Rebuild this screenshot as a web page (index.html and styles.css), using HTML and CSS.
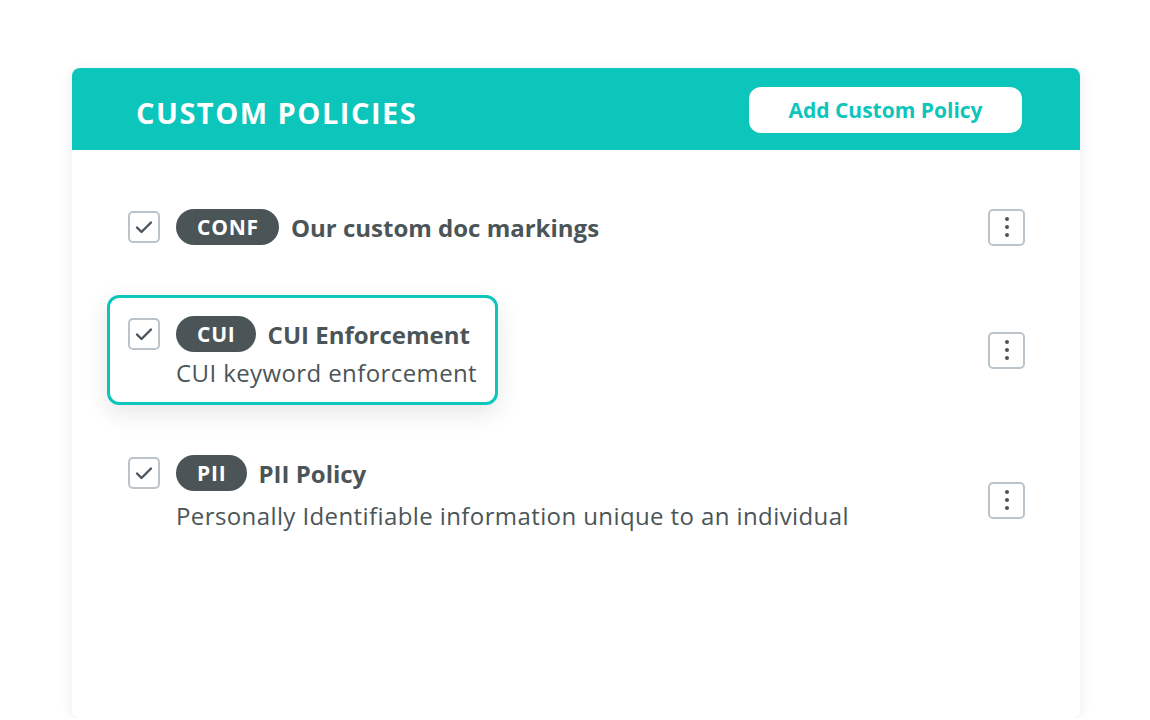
FILE: index.html
```html
<!DOCTYPE html>
<html lang="en">
<head>
    <meta charset="UTF-8">
    <meta name="viewport" content="width=device-width, initial-scale=1.0">
    <title>Custom Policies</title>
    <link rel="stylesheet" href="styles.css">
</head>
<body>
    <div class="card">
        <div class="card-header">
            <h1 class="card-title">CUSTOM POLICIES</h1>
            <button class="add-button">Add Custom Policy</button>
        </div>
        <div class="policy-list">
            <div class="policy-row">
                <div class="policy-main">
                    <div class="policy-line">
                        <span class="checkbox">
                            <svg width="20" height="20" viewBox="0 0 20 20"><path d="M3 10.5l4.5 4.5 9.5-9.5" fill="none" stroke="#4b5558" stroke-width="2.4" stroke-linecap="round" stroke-linejoin="round"/></svg>
                        </span>
                        <span class="badge">CONF</span>
                        <span class="policy-name">Our custom doc markings</span>
                    </div>
                </div>
                <button class="kebab"><span></span><span></span><span></span></button>
            </div>
            <div class="policy-row">
                <div class="policy-main selected">
                    <div class="policy-line">
                        <span class="checkbox">
                            <svg width="20" height="20" viewBox="0 0 20 20"><path d="M3 10.5l4.5 4.5 9.5-9.5" fill="none" stroke="#4b5558" stroke-width="2.4" stroke-linecap="round" stroke-linejoin="round"/></svg>
                        </span>
                        <span class="badge">CUI</span>
                        <span class="policy-name">CUI Enforcement</span>
                    </div>
                    <div class="policy-desc">CUI keyword enforcement</div>
                </div>
                <button class="kebab"><span></span><span></span><span></span></button>
            </div>
            <div class="policy-row last">
                <div class="policy-main">
                    <div class="policy-line">
                        <span class="checkbox">
                            <svg width="20" height="20" viewBox="0 0 20 20"><path d="M3 10.5l4.5 4.5 9.5-9.5" fill="none" stroke="#4b5558" stroke-width="2.4" stroke-linecap="round" stroke-linejoin="round"/></svg>
                        </span>
                        <span class="badge">PII</span>
                        <span class="policy-name">PII Policy</span>
                    </div>
                    <div class="policy-desc">Personally Identifiable information unique to an individual</div>
                </div>
                <button class="kebab"><span></span><span></span><span></span></button>
            </div>
        </div>
    </div>
</body>
</html>
```

FILE: styles.css
```css
body {
    margin: 0;
    background-color: #ffffff;
    font-family: "Open Sans", Lato, sans-serif;
    color: #4b5558;
    overflow: hidden;
}
.card {
    margin: 68px 0 0 72px;
    width: 1008px;
    height: 650px;
    background-color: #ffffff;
    border-radius: 8px;
    box-shadow: 0 2px 14px rgba(0, 0, 0, 0.08);
    overflow: hidden;
}
.card-header {
    display: flex;
    justify-content: space-between;
    align-items: center;
    height: 82px;
    padding: 0 58px 0 64px;
    background-color: #0cc5bb;
}
.card-title {
    margin: 7px 0 0 0;
    font-size: 29px;
    font-weight: 700;
    letter-spacing: 1.5px;
    color: #ffffff;
}
.add-button {
    width: 273px;
    height: 46px;
    margin-top: 2px;
    border: none;
    border-radius: 12px;
    background-color: #ffffff;
    color: #0cc5bb;
    font-family: inherit;
    font-size: 21px;
    font-weight: 700;
}
.policy-list {
    display: flex;
    flex-direction: column;
    gap: 29px;
    padding: 38px 55px 0 35px;
}
.policy-row {
    display: flex;
    justify-content: space-between;
    align-items: center;
}
.policy-main {
    padding: 18px;
    border: 3px solid transparent;
    border-radius: 12px;
}
.policy-main.selected {
    padding-bottom: 14px;
    border-color: #0cc5bb;
    box-shadow: 0 8px 24px rgba(0, 0, 0, 0.1);
}
.policy-row.last .policy-main {
    padding-bottom: 32px;
}
.policy-line {
    display: flex;
    align-items: center;
    height: 36px;
}
.checkbox {
    display: flex;
    justify-content: center;
    align-items: center;
    width: 28px;
    height: 28px;
    border: 2px solid #bac4ca;
    border-radius: 5px;
    margin-right: 16px;
    flex-shrink: 0;
}
.badge {
    display: inline-flex;
    align-items: center;
    height: 36px;
    padding: 0 20px 0 21px;
    border-radius: 18px;
    background-color: #4b5558;
    color: #ffffff;
    font-size: 21px;
    font-weight: 700;
    letter-spacing: 0.8px;
    margin-right: 12px;
}
.policy-name {
    font-size: 24px;
    font-weight: 700;
}
.policy-desc {
    margin: 6px 0 0 48px;
    font-size: 24px;
    line-height: 30px;
    letter-spacing: 0.4px;
}
.policy-row.last .policy-desc {
    margin-top: 10px;
}
.kebab {
    display: flex;
    flex-direction: column;
    justify-content: center;
    align-items: center;
    gap: 4px;
    width: 37px;
    height: 37px;
    padding: 0;
    border: 2px solid #bac4ca;
    border-radius: 5px;
    background-color: #ffffff;
}
.kebab span {
    width: 4px;
    height: 4px;
    border-radius: 50%;
    background-color: #4b5558;
}
```
